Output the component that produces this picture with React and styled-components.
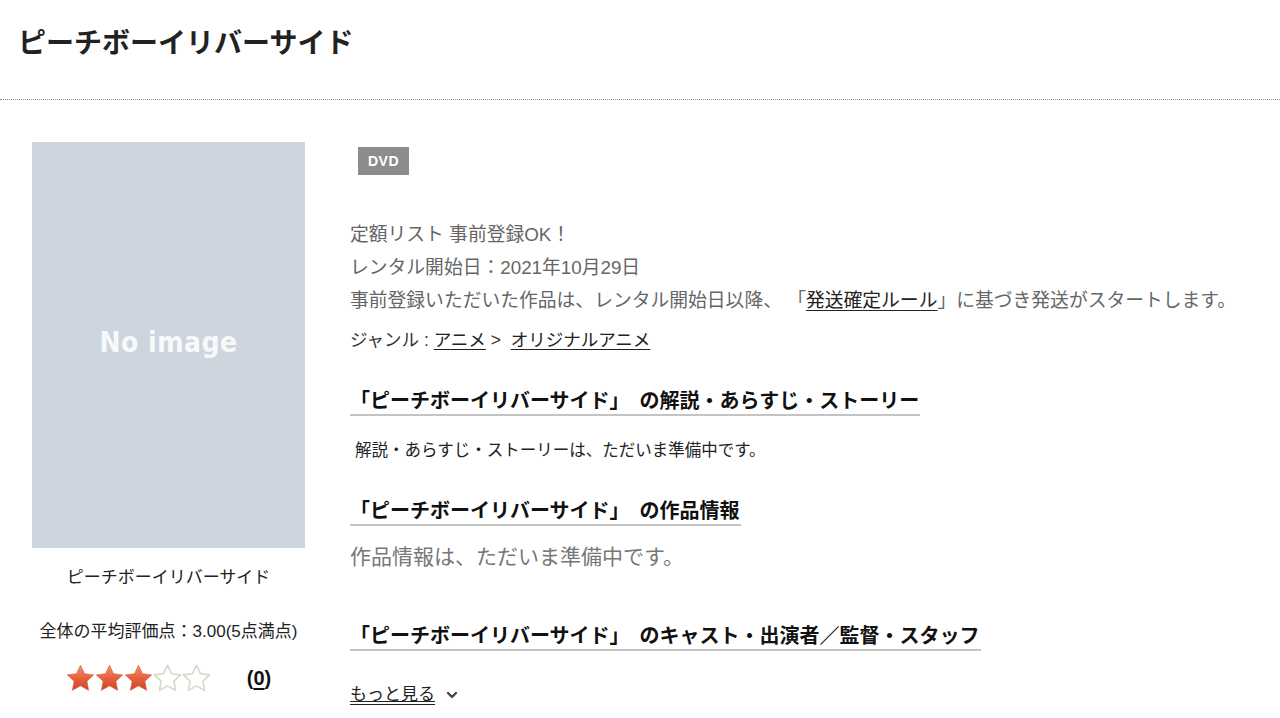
import styled, { createGlobalStyle } from "styled-components";
import { ChevronDown } from "lucide-react";

const Global = createGlobalStyle`
  body{
    margin:0;
    background:#fff;
    font-family:"Liberation Sans","Noto Sans CJK JP",sans-serif;
    color:#333;
  }
`;

const Header = styled.header`
  height:100px;
  box-sizing:border-box;
  padding:22px 18px 0;
  border-bottom:1px dotted #8a8a8a;
`;

const Title = styled.h1`
  margin:0;
  font-size:28px;
  line-height:39px;
  font-weight:700;
  color:#222;
  font-family:"Noto Sans CJK JP",sans-serif;
`;

const Main = styled.main`
  display:flex;
  padding:42px 0 0 32px;
  gap:45px;
`;

const Side = styled.aside`
  width:273px;
  flex-shrink:0;
  display:flex;
  flex-direction:column;
  align-items:center;
  text-align:center;
`;

const Cover = styled.div`
  width:273px;
  height:406px;
  background:#cdd5df;
  display:flex;
  align-items:center;
  justify-content:center;
  span{
    font-family:"DejaVu Sans Condensed","DejaVu Sans",sans-serif;
    font-weight:700;
    font-size:28px;
    color:rgba(255,255,255,0.88);
    letter-spacing:0.5px;
    margin-top:-5px;
  }
`;

const SideText = styled.p`
  margin:${p => p.$top}px 0 0;
  font-size:17px;
  line-height:24px;
  color:#222;
`;

const RatingRow = styled.div`
  margin-top:19px;
  height:30px;
  display:flex;
  align-items:center;
  gap:36px;
`;

const Stars = styled.div`
  display:flex;
  svg{ display:block; }
`;

const Count = styled.span`
  font-weight:700;
  font-size:20px;
  color:#111;
  u{ text-decoration-thickness:2px; text-underline-offset:3px; }
`;

const Content = styled.section`
  flex:1;
  display:flex;
  flex-direction:column;
  align-items:flex-start;
`;

const Badge = styled.span`
  margin:5px 0 0 8px;
  width:51px;
  height:28px;
  display:flex;
  align-items:center;
  justify-content:center;
  background:#8c8c8c;
  color:#fff;
  font-weight:700;
  font-size:14px;
  letter-spacing:0.5px;
`;

const Info = styled.div`
  margin-top:43px;
  font-size:18.8px;
  line-height:33px;
  color:#666;
  a{ color:#222; text-decoration:underline; text-underline-offset:3px; }
`;

const Genre = styled.div`
  margin-top:8px;
  font-size:17.5px;
  line-height:30px;
  color:#333;
  a{ color:#222; text-decoration:underline; text-underline-offset:3px; }
`;

const Heading = styled.h2`
  margin:${p => p.$top}px 0 0;
  display:inline-block;
  font-size:20px;
  line-height:29px;
  font-weight:700;
  color:#111;
  font-family:"Noto Sans CJK JP",sans-serif;
  border-bottom:2px solid #c4c4c4;
  padding-right:1px;
  b{ margin-right:10px; font-weight:700; }
`;

const Body = styled.p`
  margin:${p => p.$top}px 0 0 ${p => p.$indent || 0}px;
  font-size:${p => p.$size}px;
  line-height:${p => p.$lh}px;
  color:${p => p.$color};
`;

const More = styled.a`
  margin-top:31px;
  display:flex;
  align-items:center;
  gap:9px;
  font-size:17px;
  line-height:26px;
  color:#222;
  span{ text-decoration:underline; text-underline-offset:4px; }
  svg{ color:#444; }
`;

const StarIcon = ({ on }) => (
  <svg width="29" height="29" viewBox="0 0 24 24">
    <defs>
      <linearGradient id="sg" x1="0" y1="0" x2="0" y2="1">
        <stop offset="0" stopColor="#f59376" />
        <stop offset="0.5" stopColor="#e8613f" />
        <stop offset="1" stopColor="#cf4426" />
      </linearGradient>
    </defs>
    <path
      d="M12 1l3.3 7 7.6 1-5.6 5.2 1.4 7.6L12 18.1l-6.7 3.7 1.4-7.6L1.1 9l7.6-1z"
      fill={on ? "url(#sg)" : "#fff"}
      stroke={on ? "#d0532f" : "#dcd6c8"}
      strokeWidth={on ? 0.5 : 1.3}
      strokeLinejoin="round"
    />
  </svg>
);

const name = "ピーチボーイリバーサイド";

export default function App() {
  return (
    <>
      <Global />
      <Header>
        <Title>{name}</Title>
      </Header>
      <Main>
        <Side>
          <Cover><span>No image</span></Cover>
          <SideText $top={18}>{name}</SideText>
          <SideText $top={30}>全体の平均評価点：3.00(5点満点)</SideText>
          <RatingRow>
            <Stars>
              {[1, 2, 3, 4, 5].map(i => <StarIcon key={i} on={i <= 3} />)}
            </Stars>
            <Count>(<u>0</u>)</Count>
          </RatingRow>
        </Side>
        <Content>
          <Badge>DVD</Badge>
          <Info>
            <div>定額リスト 事前登録OK！</div>
            <div>レンタル開始日：2021年10月29日</div>
            <div>事前登録いただいた作品は、レンタル開始日以降、 「<a href="#">発送確定ルール</a>」に基づき発送がスタートします。</div>
          </Info>
          <Genre>ジャンル : <a href="#">アニメ</a> &gt;&nbsp; <a href="#">オリジナルアニメ</a></Genre>
          <Heading $top={30}><b>「{name}」</b>の解説・あらすじ・ストーリー</Heading>
          <Body $top={22} $indent={5} $size={16.5} $lh={24} $color="#222">解説・あらすじ・ストーリーは、ただいま準備中です。</Body>
          <Heading $top={33}><b>「{name}」</b>の作品情報</Heading>
          <Body $top={16} $size={21} $lh={30} $color="#777">作品情報は、ただいま準備中です。</Body>
          <Heading $top={48}><b>「{name}」</b>のキャスト・出演者／監督・スタッフ</Heading>
          <More href="#"><span>もっと見る</span><ChevronDown size={16} strokeWidth={3.5} /></More>
        </Content>
      </Main>
    </>
  );
}
